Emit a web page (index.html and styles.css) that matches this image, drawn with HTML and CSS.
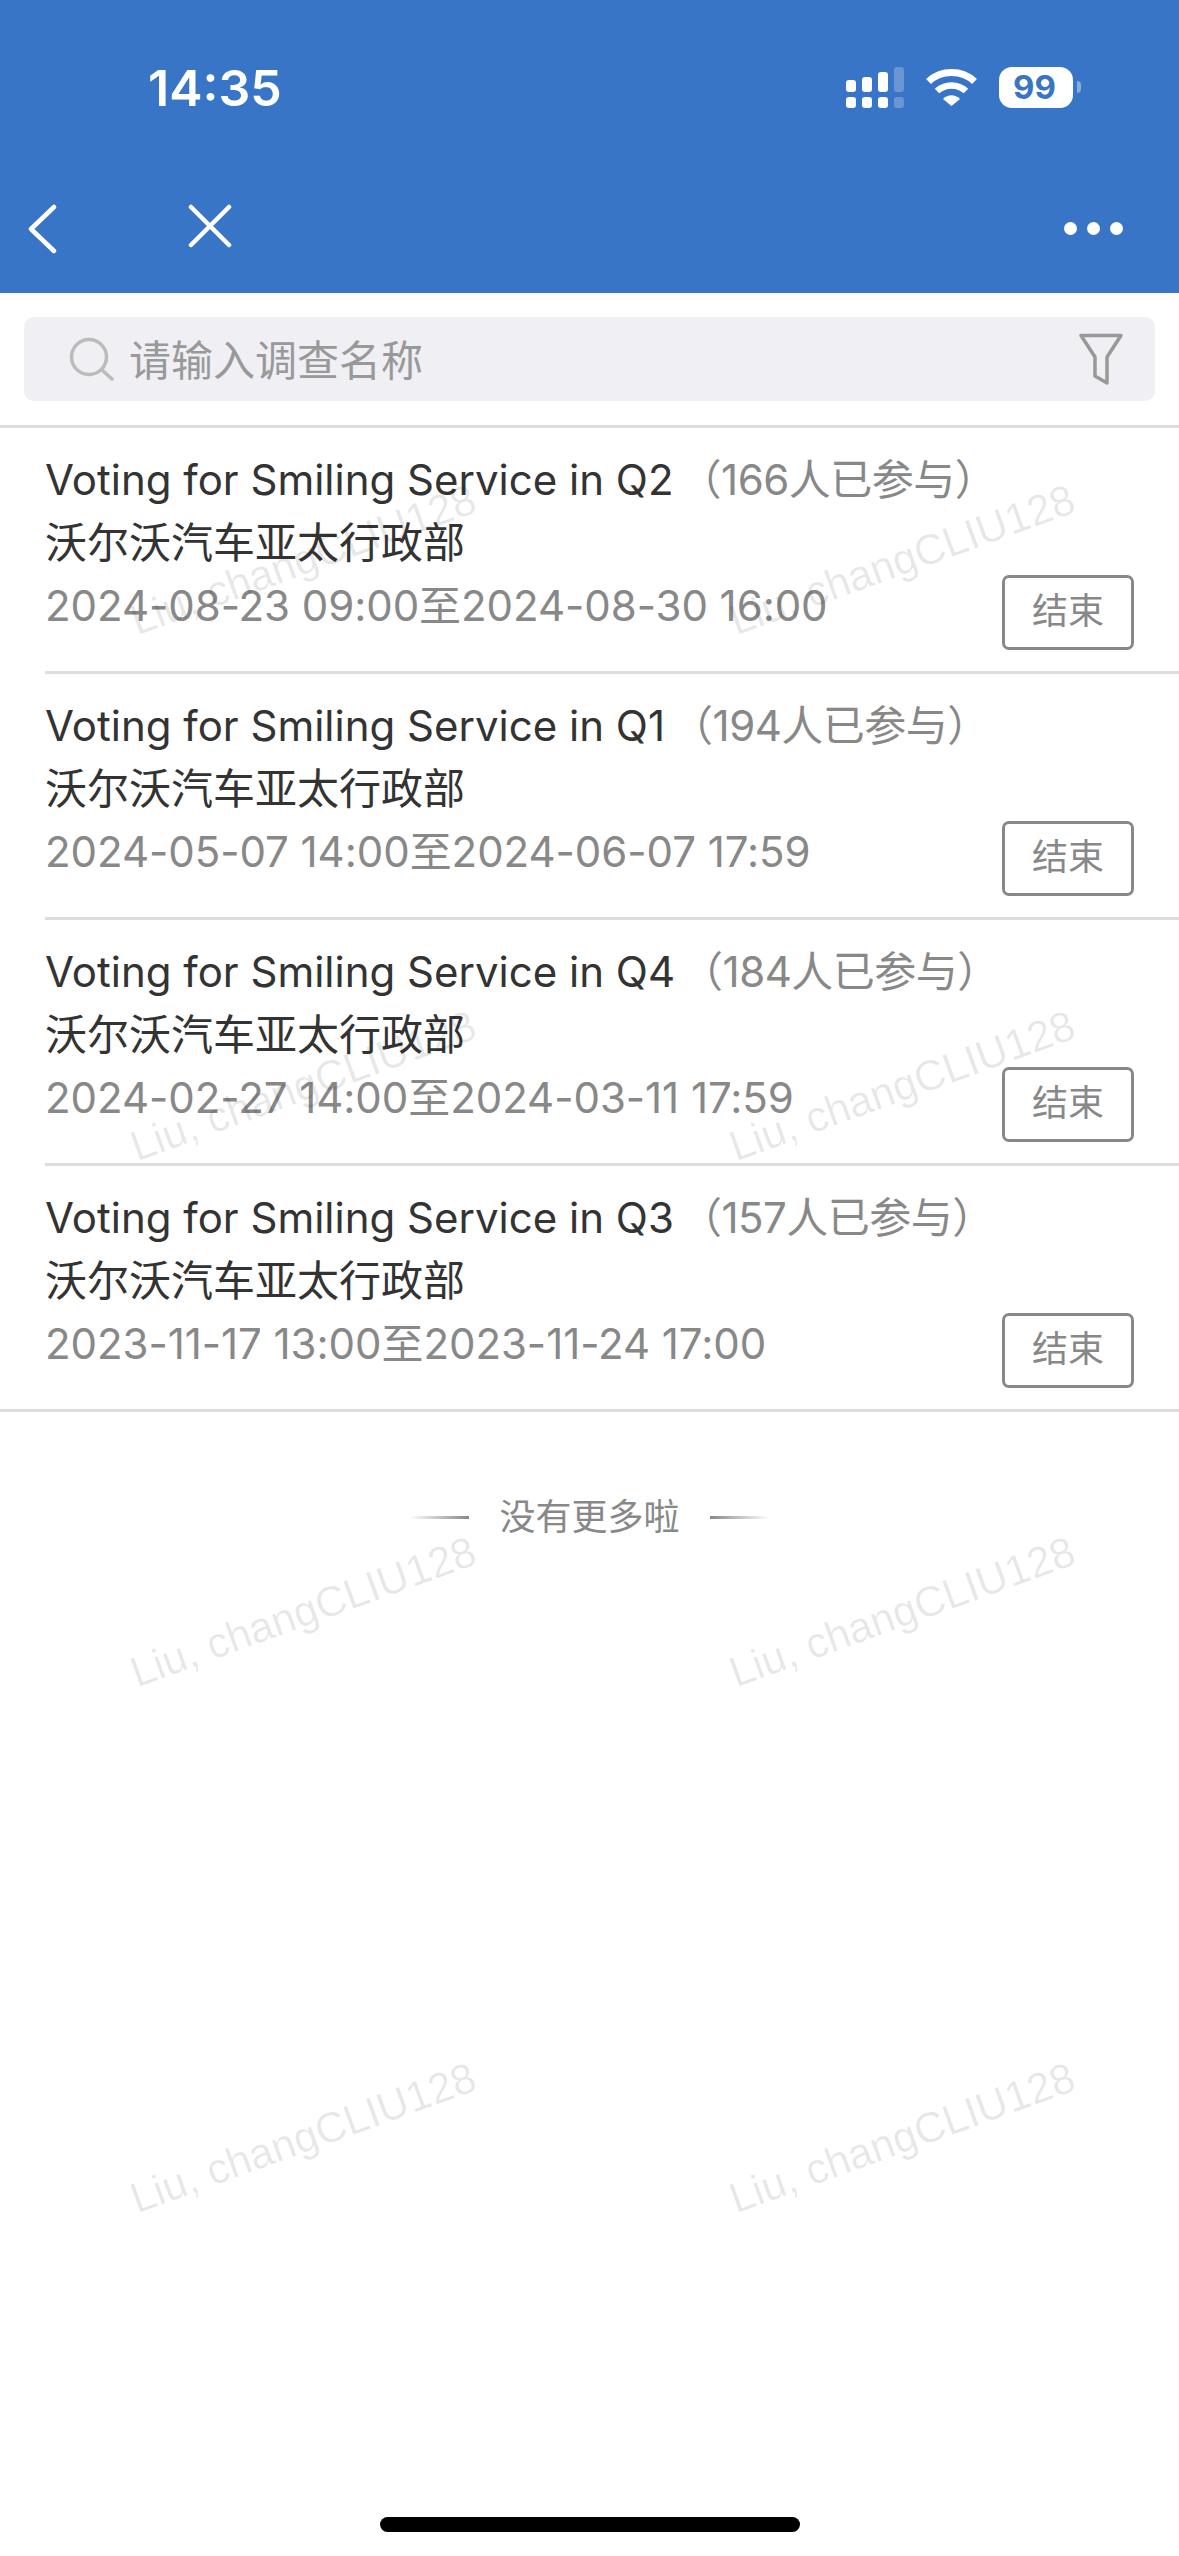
FILE: index.html
```html
<!DOCTYPE html>
<html lang="zh-CN">
<head>
    <meta charset="UTF-8">
    <meta name="viewport" content="width=device-width, initial-scale=1.0">
    <title>调查列表</title>
    <link rel="stylesheet" href="styles.css">
</head>
<body>
    <div class="page">
        <div class="header">
            <div class="status_bar">
                <span class="time">14:35</span>
                <div class="status_icons">
                    <svg class="signal" width="58" height="41" viewBox="0 0 58 41" fill="#fff">
                        <rect x="0" y="13" width="10" height="12" rx="3"/>
                        <rect x="16" y="10" width="10" height="15" rx="3"/>
                        <rect x="32" y="5" width="10" height="20" rx="3"/>
                        <rect x="48" y="0" width="10" height="25" rx="3" opacity=".25"/>
                        <rect x="0" y="30" width="10" height="11" rx="3"/>
                        <rect x="16" y="30" width="10" height="11" rx="3"/>
                        <rect x="32" y="30" width="10" height="11" rx="3"/>
                        <rect x="48" y="30" width="10" height="11" rx="3" opacity=".25"/>
                    </svg>
                    <svg class="wifi" width="51" height="37" viewBox="0 0 51 37" fill="none" stroke="#fff">
                        <path d="M2.5 12.5C15 0.5 36 0.5 48.5 12.5" stroke-width="7"/>
                        <path d="M11 22C19 14.500 32 14.500 40 22" stroke-width="6.500"/>
                        <path d="M17 30C22 25 29 25 34 30L25.500 37Z" fill="#fff" stroke="none"/>
                    </svg>
                    <div class="battery"><span class="battery_num">99</span></div>
                    <div class="battery_nub"></div>
                </div>
            </div>
            <div class="nav">
                <svg class="nav_back" width="30" height="50" viewBox="0 0 30 50" fill="none" stroke="#fff" stroke-width="4.500" stroke-linecap="round" stroke-linejoin="round">
                    <path d="M27 3L4 25L27 47"/>
                </svg>
                <svg class="nav_close" width="46" height="46" viewBox="0 0 46 46" fill="none" stroke="#fff" stroke-width="4.500" stroke-linecap="round">
                    <path d="M3 3L41 41M41 3L3 41"/>
                </svg>
                <div class="nav_more">
                    <span class="dot"></span>
                    <span class="dot"></span>
                    <span class="dot"></span>
                </div>
            </div>
        </div>

        <div class="search_wrap">
            <div class="search">
                <svg class="search_icon" width="46" height="44" viewBox="0 0 46 44" fill="none" stroke="#bbb" stroke-width="3.500" stroke-linecap="round">
                    <circle cx="20" cy="20" r="17.500"/>
                    <path d="M33 33L43 42"/>
                </svg>
                <span class="search_text">请输入调查名称</span>
                <svg class="filter_icon" width="44" height="52" viewBox="0 0 44 52" fill="none" stroke="#999" stroke-width="3.500" stroke-linejoin="round">
                    <path d="M2 2.500H42L28 24V50L16 43V24Z"/>
                </svg>
            </div>
        </div>

        <div class="list">
            <div class="item">
                <div class="item_info">
                    <div class="item_title">Voting for Smiling Service in Q2<span class="item_count">（166人已参与）</span></div>
                    <div class="item_org">沃尔沃汽车亚太行政部</div>
                    <div class="item_date">2024-08-23 09:00至2024-08-30 16:00</div>
                </div>
                <div class="item_btn">结束</div>
            </div>
            <div class="item">
                <div class="item_info">
                    <div class="item_title">Voting for Smiling Service in Q1<span class="item_count">（194人已参与）</span></div>
                    <div class="item_org">沃尔沃汽车亚太行政部</div>
                    <div class="item_date">2024-05-07 14:00至2024-06-07 17:59</div>
                </div>
                <div class="item_btn">结束</div>
            </div>
            <div class="item">
                <div class="item_info">
                    <div class="item_title">Voting for Smiling Service in Q4<span class="item_count">（184人已参与）</span></div>
                    <div class="item_org">沃尔沃汽车亚太行政部</div>
                    <div class="item_date">2024-02-27 14:00至2024-03-11 17:59</div>
                </div>
                <div class="item_btn">结束</div>
            </div>
            <div class="item item_last">
                <div class="item_info">
                    <div class="item_title">Voting for Smiling Service in Q3<span class="item_count">（157人已参与）</span></div>
                    <div class="item_org">沃尔沃汽车亚太行政部</div>
                    <div class="item_date">2023-11-17 13:00至2023-11-24 17:00</div>
                </div>
                <div class="item_btn">结束</div>
            </div>
        </div>

        <div class="no_more">
            <span class="line line_left"></span>
            <span class="no_more_text">没有更多啦</span>
            <span class="line line_right"></span>
        </div>

        <div class="watermarks">
            <span class="mark">Liu, changCLIU128</span>
            <span class="mark">Liu, changCLIU128</span>
            <span class="mark">Liu, changCLIU128</span>
            <span class="mark">Liu, changCLIU128</span>
            <span class="mark">Liu, changCLIU128</span>
            <span class="mark">Liu, changCLIU128</span>
            <span class="mark">Liu, changCLIU128</span>
            <span class="mark">Liu, changCLIU128</span>
        </div>

        <div class="home_bar"></div>
    </div>
</body>
</html>
```

FILE: styles.css
```css
*{
    margin: 0;
    padding: 0;
    box-sizing: border-box;
}

html,body{
    height: 100%;
    background-color: #fff;
}

body{
    font-family: Inter, "Noto Sans CJK SC", sans-serif;
}

.page{
    width: 1179px;
    height: 2556px;
    position: relative;
    overflow: hidden;
}

.header{
    height: 293px;
    background-color: #3975c6;
    color: #fff;
}

.status_bar{
    height: 190px;
    padding: 67px 98px 0 148px;
    display: flex;
    justify-content: space-between;
    align-items: flex-start;
}

.time{
    font-size: 50px;
    line-height: 42px;
    font-weight: 600;
    font-family: Inter, sans-serif;
}

.status_icons{
    display: flex;
    align-items: flex-start;
}

.wifi{
    margin: 2px 0 0 22px;
}

.battery{
    width: 74px;
    height: 41px;
    margin-left: 22px;
    background-color: #fff;
    border-radius: 13px;
    display: flex;
    align-items: center;
    padding-left: 14px;
}

.battery_num{
    color: #3975c6;
    font-size: 33px;
    font-weight: 700;
    line-height: 41px;
    font-family: Inter, sans-serif;
}

.battery_nub{
    width: 4px;
    height: 12px;
    margin: 14px 0 0 4px;
    background-color: rgba(255, 255, 255, 0.4);
    border-radius: 0 6px 6px 0;
}

.nav{
    height: 60px;
    padding: 14px 56px 0 27px;
    display: flex;
    align-items: flex-start;
}

.nav_close{
    margin-left: 131px;
}

.nav_more{
    margin-left: auto;
    margin-top: 18px;
    display: flex;
    gap: 10px;
}

.dot{
    width: 13px;
    height: 13px;
    background-color: #fff;
    border-radius: 50%;
}

.search_wrap{
    padding: 24px 24px;
    height: 135px;
    border-bottom: 3px solid #ddd;
}

.search{
    height: 84px;
    padding: 0 32px 0 45px;
    background-color: #efeff4;
    border-radius: 10px;
    display: flex;
    align-items: center;
}

.search_text{
    margin-left: 14px;
    margin-bottom: 3px;
    font-size: 42px;
    color: #999;
}

.filter_icon{
    margin-left: auto;
}

.item{
    height: 246px;
    margin-left: 45px;
    padding: 20px 45px 0 0;
    border-bottom: 3px solid #ddd;
    display: flex;
    justify-content: space-between;
    align-items: flex-start;
}

.item_last{
    margin-left: 0;
    padding-left: 45px;
}

.item_info{
    font-size: 42px;
    line-height: 63px;
    white-space: nowrap;
}

.item_title,.item_org{
    color: #333;
}

.item_count,.item_date{
    color: #888;
}

.item_count{
    margin-left: 6px;
    letter-spacing: -0.5px;
}

.item_date{
    letter-spacing: -0.05px;
}

.item_btn{
    width: 132px;
    height: 75px;
    margin-top: 127px;
    padding-bottom: 9px;
    border: 3px solid #888;
    border-radius: 7px;
    color: #888;
    font-size: 36px;
    display: flex;
    align-items: center;
    justify-content: center;
}

.no_more{
    margin-top: 78px;
    display: flex;
    justify-content: center;
    align-items: center;
    font-size: 36px;
    line-height: 54px;
    color: #888;
}

.no_more_text{
    margin: 0 30px;
}

.line{
    width: 60px;
    height: 3px;
}

.line_left{
    background: linear-gradient(to right, rgba(136, 136, 136, 0), #888);
}

.line_right{
    background: linear-gradient(to right, #888, rgba(136, 136, 136, 0));
}

.watermarks{
    position: absolute;
    top: 0;
    left: 0;
    width: 100%;
    height: 100%;
    padding: 598px 0 0 140px;
    display: grid;
    grid-template-columns: 599px 299px;
    grid-auto-rows: 526px;
    pointer-events: none;
}

.mark{
    width: max-content;
    height: 46px;
    font-family: "Liberation Sans", sans-serif;
    font-size: 42.500px;
    line-height: 46px;
    color: rgba(0, 0, 0, 0.09);
    transform: rotate(-20deg);
    transform-origin: left bottom;
}

.home_bar{
    position: absolute;
    left: 380px;
    bottom: 24px;
    width: 420px;
    height: 15px;
    background-color: #000;
    border-radius: 8px;
}
```
